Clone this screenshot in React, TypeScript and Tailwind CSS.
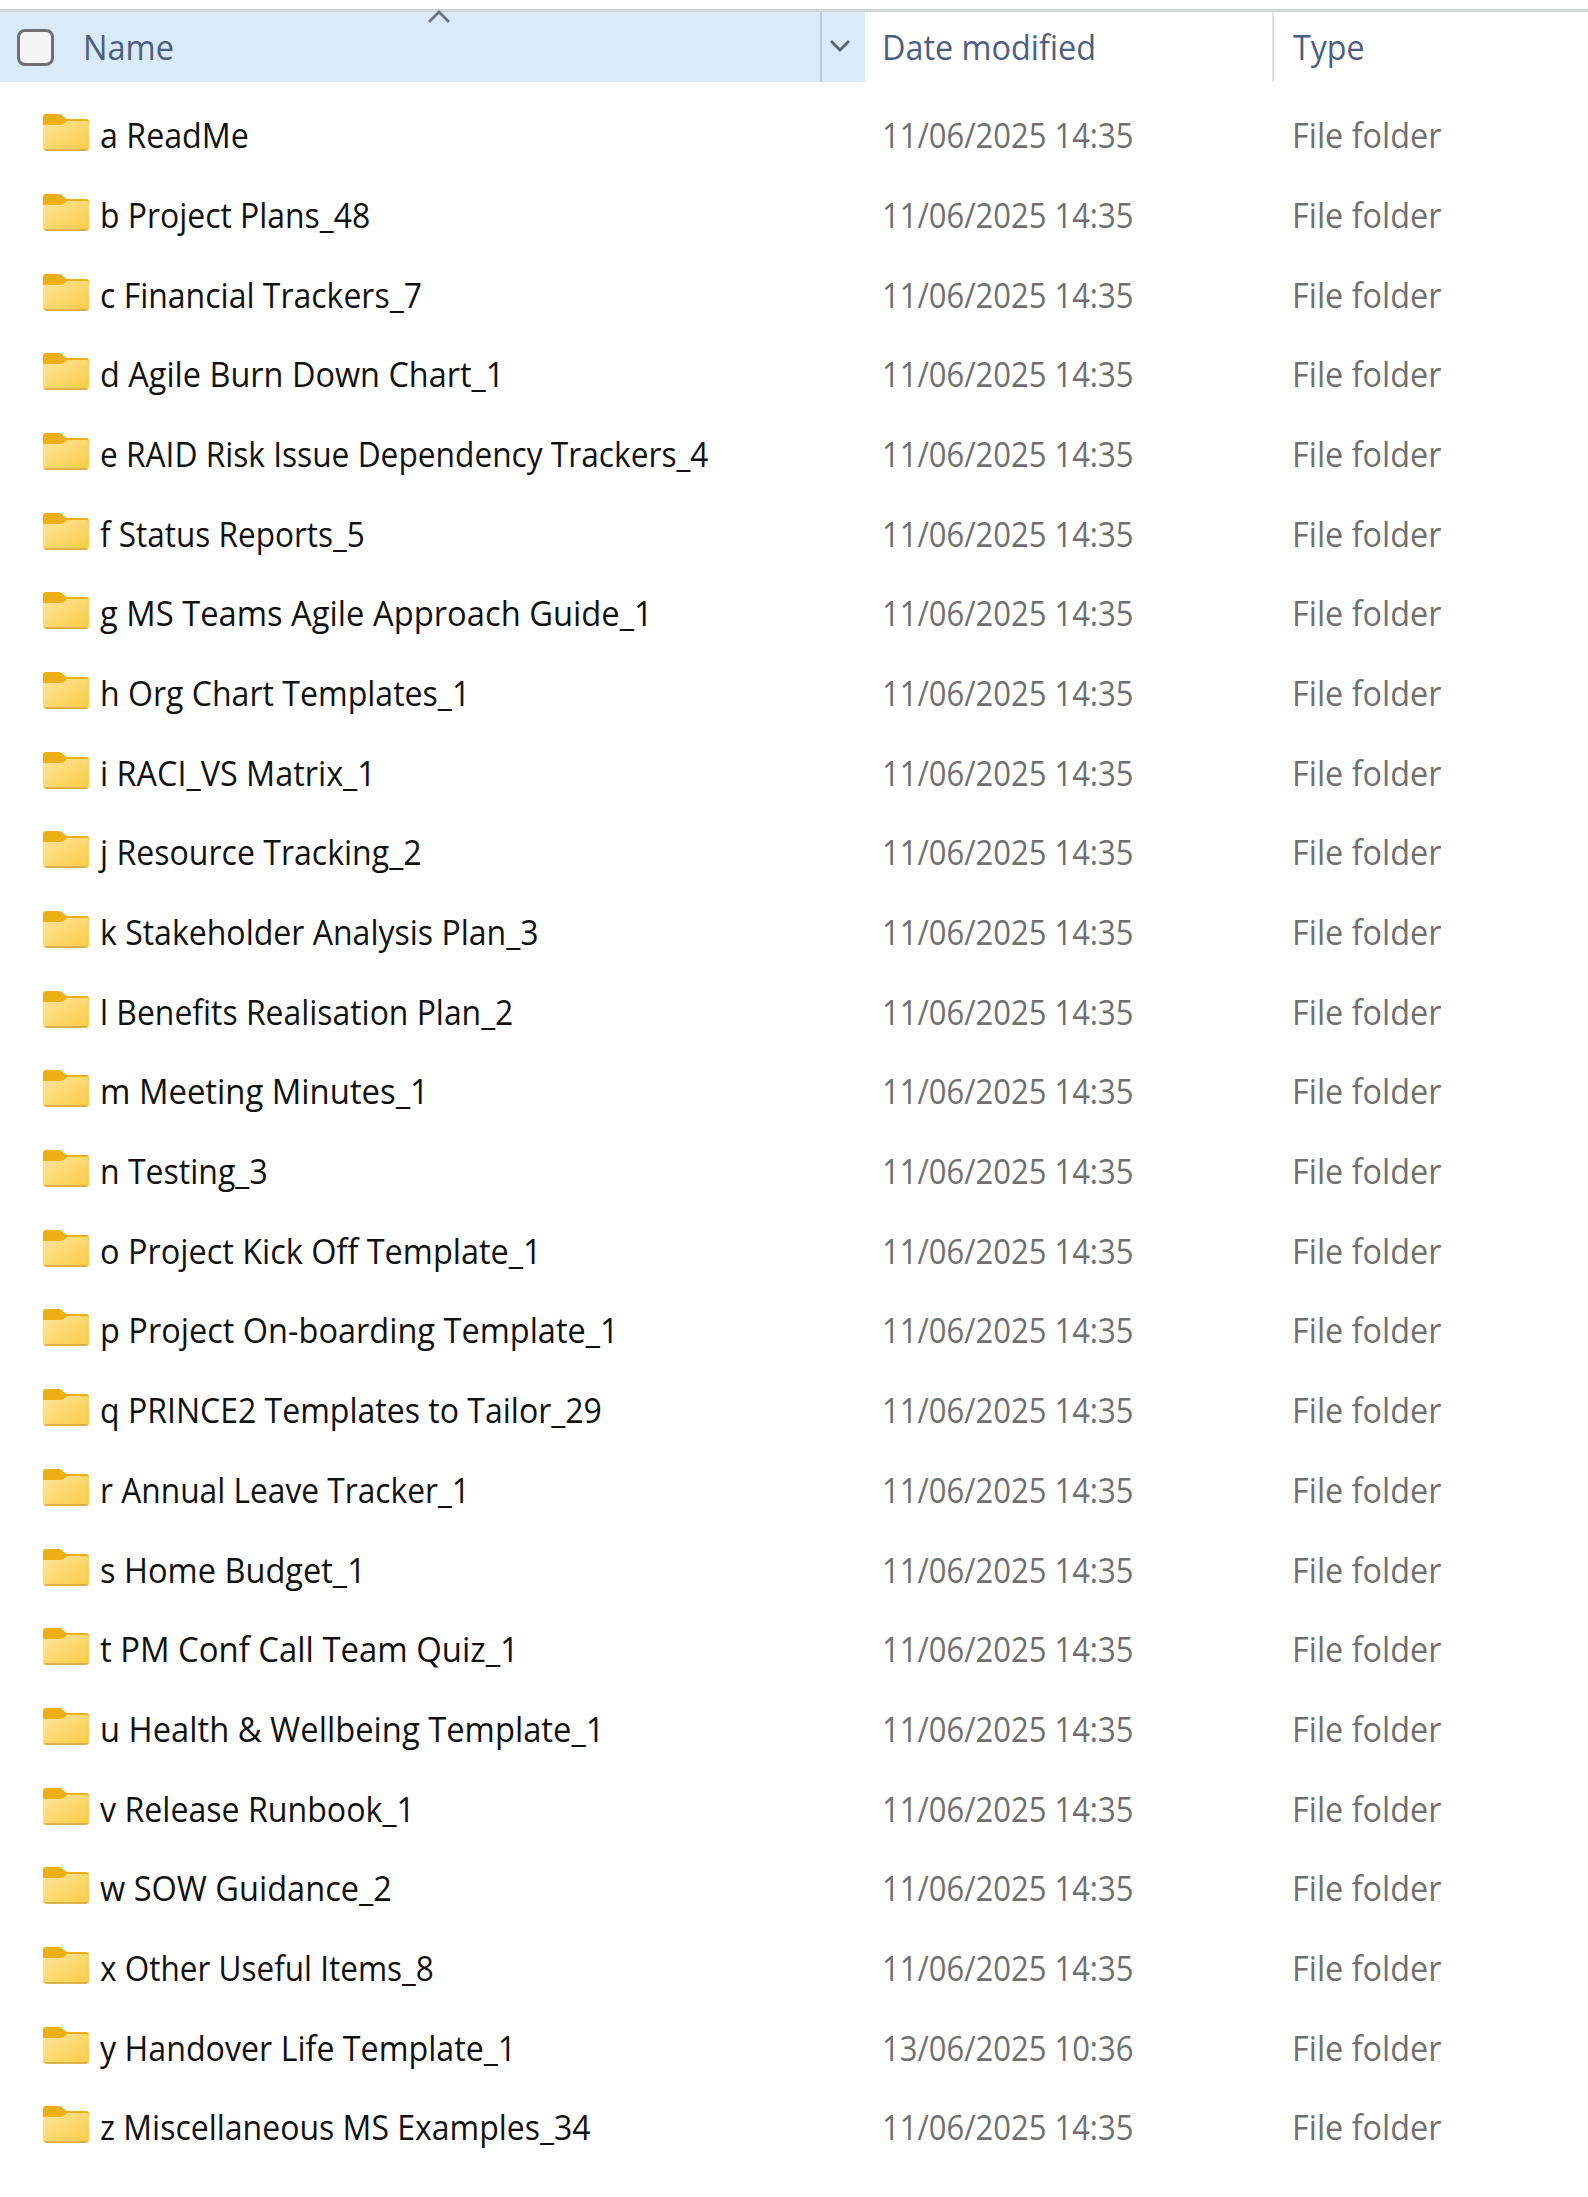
interface FolderItem {
  name: string;
  stretch: number;
  modified?: string;
}

const DEFAULT_DATE = "11/06/2025 14:35";

// stretch = horizontal condensing of the label
const folders: FolderItem[] = [
  { name: "a ReadMe", stretch: 0.92 },
  { name: "b Project Plans_48", stretch: 0.911 },
  { name: "c Financial Trackers_7", stretch: 0.914 },
  { name: "d Agile Burn Down Chart_1", stretch: 0.927 },
  { name: "e RAID Risk Issue Dependency Trackers_4", stretch: 0.905 },
  { name: "f Status Reports_5", stretch: 0.9 },
  { name: "g MS Teams Agile Approach Guide_1", stretch: 0.935 },
  { name: "h Org Chart Templates_1", stretch: 0.916 },
  { name: "i RACI_VS Matrix_1", stretch: 0.925 },
  { name: "j Resource Tracking_2", stretch: 0.916 },
  { name: "k Stakeholder Analysis Plan_3", stretch: 0.915 },
  { name: "l Benefits Realisation Plan_2", stretch: 0.911 },
  { name: "m Meeting Minutes_1", stretch: 0.938 },
  { name: "n Testing_3", stretch: 0.915 },
  { name: "o Project Kick Off Template_1", stretch: 0.927 },
  { name: "p Project On-boarding Template_1", stretch: 0.929 },
  { name: "q PRINCE2 Templates to Tailor_29", stretch: 0.915 },
  { name: "r Annual Leave Tracker_1", stretch: 0.906 },
  { name: "s Home Budget_1", stretch: 0.93 },
  { name: "t PM Conf Call Team Quiz_1", stretch: 0.939 },
  { name: "u Health & Wellbeing Template_1", stretch: 0.935 },
  { name: "v Release Runbook_1", stretch: 0.918 },
  { name: "w SOW Guidance_2", stretch: 0.93 },
  { name: "x Other Useful Items_8", stretch: 0.9 },
  { name: "y Handover Life Template_1", stretch: 0.92, modified: "13/06/2025 10:36" },
  { name: "z Miscellaneous MS Examples_34", stretch: 0.914 },
];

function FolderIcon() {
  return (
    <svg className="mb-[4px] h-[38px] w-[46px] shrink-0" viewBox="0 0 46 38">
      <defs>
        <linearGradient id="folder" x1="0" y1="0" x2="1" y2="1">
          <stop offset="0" stopColor="#ffe59a" />
          <stop offset="1" stopColor="#fccb45" />
        </linearGradient>
      </defs>
      <path d="M0 3Q0 0 3 0H16Q19 0 21 3L24 5H43Q46 5 46 8V20H0Z" fill="#ecb015" />
      <path d="M0 11H17Q20 11 22 9L24 7H43Q46 7 46 10V34Q46 37 43 37H3Q0 37 0 34Z" fill="url(#folder)" />
      <path d="M1 35Q2 37 4 37H42Q44 37 45 35Z" fill="#dcb04a" />
    </svg>
  );
}

function HeaderRow() {
  return (
    <div className="flex h-[73px] border-t-[3px] border-[#d2d5d8] text-[#4d5f80]">
      <div className="relative flex w-[820px] items-center bg-[#d9eaf8] pl-[17px]">
        <div className="size-[37px] rounded-[8px] border-[3px] border-[#707070] bg-[#f5f5f6]" />
        <span className="ml-[29px] origin-left scale-x-93">Name</span>
        <svg className="absolute left-[427px] -top-[2px] h-[14px] w-[24px]" viewBox="0 0 24 14" fill="none">
          <path d="M2 12L12 2L22 12" stroke="#6b7280" strokeWidth="2.8" />
        </svg>
      </div>
      <div className="flex w-[45px] border-l-2 border-[#b9cbd9] bg-[#d9eaf8] pt-[27px] pl-[7px]">
        <svg className="h-[14px] w-[22px]" viewBox="0 0 22 14" fill="none">
          <path d="M2 2L11 11L20 2" stroke="#56636f" strokeWidth="2.8" />
        </svg>
      </div>
      <div className="flex w-[409px] items-center border-r-2 border-[#e2e4e6] pl-[17px]">
        <span className="origin-left scale-x-[0.925]">Date modified</span>
      </div>
      <div className="flex items-center pl-[19px]">
        <span className="origin-left scale-x-[0.92]">Type</span>
      </div>
    </div>
  );
}

function FolderRow({ name, stretch, modified = DEFAULT_DATE }: FolderItem) {
  return (
    <div className="flex h-[79.7px] items-center text-[#707070]">
      <div className="flex w-[882px] items-center pl-[43px]">
        <FolderIcon />
        <span
          className="ml-[11px] origin-left text-[#111111]"
          style={{ transform: `scaleX(${stretch})` }}
        >
          {name}
        </span>
      </div>
      <div className="w-[410px]">
        <span className="inline-block origin-left scale-x-[0.885]">{modified}</span>
      </div>
      <span className="origin-left scale-x-[0.925]">File folder</span>
    </div>
  );
}

export default function App() {
  return (
    <div className="h-[2197px] w-[1588px] overflow-hidden whitespace-nowrap bg-white pt-[9px] font-['Open_Sans',sans-serif] text-[35px] leading-[48px]">
      <HeaderRow />
      <div className="pt-[13.3px]">
        {folders.map((folder) => (
          <FolderRow key={folder.name} {...folder} />
        ))}
      </div>
    </div>
  );
}
